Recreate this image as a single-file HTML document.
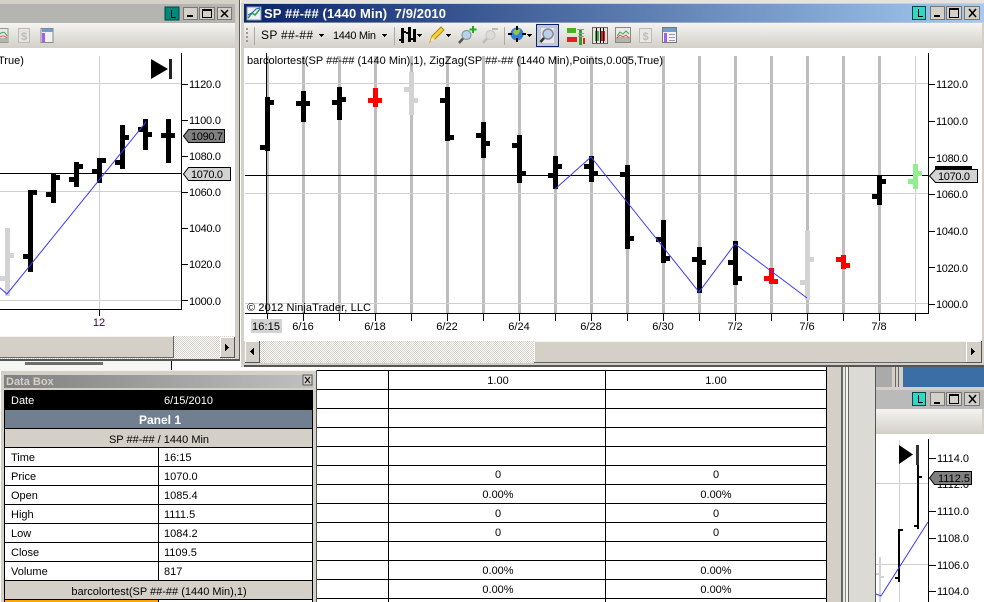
<!DOCTYPE html>
<html><head><meta charset="utf-8"><style>
html,body{margin:0;padding:0;background:#fff;width:984px;height:602px;overflow:hidden}
svg{display:block;font-family:"Liberation Sans",sans-serif;font-size:11px;fill:#000}
.c{shape-rendering:crispEdges}
.m{text-anchor:middle}
</style></head><body>
<svg width="984" height="602" viewBox="0 0 984 602" xmlns="http://www.w3.org/2000/svg">
<defs>
<linearGradient id="tb" x1="0" y1="0" x2="0" y2="1"><stop offset="0" stop-color="#f5f4f1"/><stop offset="1" stop-color="#d3d0c8"/></linearGradient>
<linearGradient id="act" x1="0" y1="0" x2="1" y2="0"><stop offset="0" stop-color="#0a246a"/><stop offset="1" stop-color="#a6caf0"/></linearGradient>
<linearGradient id="ina" x1="0" y1="0" x2="1" y2="0"><stop offset="0" stop-color="#808080"/><stop offset="1" stop-color="#c0c0c0"/></linearGradient>
<pattern id="dith" width="2" height="2" patternUnits="userSpaceOnUse"><rect width="2" height="2" fill="#fff"/><rect width="1" height="1" fill="#d4d0c8"/><rect x="1" y="1" width="1" height="1" fill="#d4d0c8"/></pattern>
</defs>
<g class="c">
<rect width="984" height="602" fill="#fff"/>
<!-- LEFT WINDOW -->
<rect x="0" y="0" width="240" height="361" fill="#d4d0c8"/>
<rect x="0" y="4" width="235" height="19" fill="#b4b4b0"/>
<rect x="0" y="23" width="235" height="25" fill="url(#tb)"/>
<rect x="0" y="48" width="235" height="288" fill="#fff"/>
<rect x="239" y="0" width="1" height="361" fill="#5c5c58"/>
<rect x="0" y="359" width="240" height="2" fill="#555"/>
<!-- left chart grid -->
<path d="M0 83h181v1H0zM0 191h181v1H0zM0 300h181v1H0zM99 56h1v253h-1z" fill="#d0d0c8"/>
<path d="M181 53h1v257h-1zM0 309h181v1H0zM99 310h1v6h-1zM0 173h181v1H0zM182 84h6v1h-6zM182 120h6v1h-6zM182 156h6v1h-6zM182 192h6v1h-6zM182 228h6v1h-6zM182 264h6v1h-6zM182 300h6v1h-6z" fill="#000"/>
<path d="M5 228h5v68H5zM0 276h5v5H0zM10 253h4v5h-4z" fill="#d3d3d3"/>
<path d="M28 190h5v82h-5zM23 254h5v5h-5zM33 190h4v5h-4zM51 174h5v29h-5zM46 192h5v5h-5zM56 175h4v5h-4zM74 162h5v25h-5zM69 177h5v5h-5zM79 164h4v5h-4zM97 158h5v25h-5zM92 169h5v5h-5zM102 158h4v5h-4zM120 125h5v44h-5zM115 160h5v5h-5zM125 135h4v5h-4zM143 119h5v31h-5zM138 127h5v5h-5zM148 132h4v5h-4zM166 119h5v44h-5zM161 133h14v5h-14z" fill="#000"/>
</g>
<path d="M-1 287L7 294L146 122" fill="none" stroke="#3a3aff" stroke-width="1"/>
<path d="M151 59L168 69L151 79z" fill="#000"/>
<g class="c"><rect x="169" y="59" width="3" height="20" fill="#222"/></g>
<path d="M183.500 136L188.500 129.500H224.500V142.500H188.500z" fill="#808080" stroke="#000"/>
<path d="M183.500 174L188.500 167.500H230.500V180.500H188.500z" fill="#d3d3d3" stroke="#000"/>
<g>
<text x="189" y="88" textLength="32">1120.0</text><text x="189" y="124" textLength="32">1100.0</text>
<text x="191" y="140" textLength="32">1090.7</text>
<text x="189" y="160" textLength="32">1080.0</text><text x="191" y="178" textLength="32">1070.0</text>
<text x="189" y="196" textLength="32">1060.0</text><text x="189" y="232" textLength="32">1040.0</text>
<text x="189" y="268" textLength="32">1020.0</text><text x="189" y="305" textLength="32">1000.0</text>
<text x="99" y="326" class="m" fill="#400040">12</text>
<text x="-2" y="64">True)</text>
</g>
<!-- left toolbar fragments -->
<g class="c">
<rect x="-1" y="28.500" width="9" height="14" fill="#e8e8e4" stroke="#999"/>
<rect x="0" y="38" width="8" height="4" fill="#b5b5ac"/>
<rect x="18.500" y="28.500" width="11" height="14" fill="#e4e3de" stroke="#bbb"/>
<rect x="41" y="28.500" width="12" height="14" fill="#f0f0f5" stroke="#888"/>
<rect x="42" y="29" width="11" height="3" fill="#6f9fc8"/><rect x="42" y="33" width="3" height="9" fill="#a060f0"/>
<!-- left window buttons -->
<rect x="165" y="7" width="14" height="13" fill="#008878" stroke="#044"/>
<path d="M171 10h1v7h4v1h-5z" fill="#000"/>
<rect x="183.500" y="7.500" width="14" height="12" fill="#d4d0c8" stroke="#777"/><rect x="187" y="15" width="6" height="2" fill="#000"/>
<rect x="199.500" y="7.500" width="15" height="12" fill="#d4d0c8" stroke="#777"/><rect x="202.500" y="9.500" width="9" height="8" fill="none" stroke="#000"/><rect x="202" y="9" width="10" height="2" fill="#000"/>
<rect x="217.500" y="7.500" width="14" height="12" fill="#d4d0c8" stroke="#777"/>
</g>
<path d="M0 34c3-3 5-2 7 2" fill="none" stroke="#38a860"/><path d="M0 37c3-2 5-1 7 1" fill="none" stroke="#e05050"/>
<text x="24" y="40" class="m" font-weight="bold" font-size="11" style="fill:#bbb">$</text>
<path d="M221 10l7 7m0-7l-7 7" stroke="#000" stroke-width="1.500"/>
<!-- left scrollbar -->
<g class="c">
<rect x="0" y="336" width="235" height="23" fill="url(#dith)"/>
<rect x="0" y="337" width="174" height="21" fill="#d4d0c8"/>
<path d="M0 336h174v1H0zM173 337h1v20h-1zM0 357h174v1H0z" fill="#666"/>
<path d="M0 336h173v1H0z" fill="#f4f3ef"/>
<rect x="220" y="337" width="15" height="21" fill="#d4d0c8"/><path d="M220 337h15v1h-15zM220 338h1v19h-1z" fill="#fff"/><path d="M220 357h15v1h-15zM234 337h1v21h-1z" fill="#555"/>
<path d="M225 344h1v7h-1zM226 345h1v5h-1zM227 346h1v3h-1zM228 347h1v1h-1z" fill="#000"/>
<rect x="0" y="361" width="240" height="9" fill="#f6f6f4"/>
<rect x="25" y="362" width="78" height="3" fill="#333" opacity=".7"/>
<rect x="171" y="361" width="1" height="9" fill="#000"/>
<rect x="172" y="361" width="68" height="9" fill="#fff"/>
</g>
<!-- MAIN WINDOW -->
<g class="c">
<rect x="240" y="0" width="744" height="367" fill="#d4d0c8"/>
<rect x="240" y="0" width="1" height="367" fill="#fff"/>
<rect x="241" y="0" width="743" height="3" fill="#e6e3dc"/>
<rect x="244" y="4" width="740" height="18.500" fill="url(#act)"/>
<rect x="244" y="23" width="738" height="25" fill="url(#tb)"/>
<rect x="244" y="48" width="738" height="293" fill="#fff"/>
<rect x="244" y="365" width="740" height="2" fill="#555"/>
<!-- grid columns -->
<path d="M266 56h3v257h-3zM302 56h3v257h-3zM338 56h3v257h-3zM374 56h3v257h-3zM410 56h3v257h-3zM446 56h3v257h-3zM482 56h3v257h-3zM518 56h3v257h-3zM554 56h3v257h-3zM590 56h3v257h-3zM626 56h3v257h-3zM662 56h3v257h-3zM698 56h3v257h-3zM734 56h3v257h-3zM770 56h3v257h-3zM806 56h3v257h-3zM842 56h3v257h-3zM878 56h3v257h-3z" fill="#bebebe"/>
<path d="M915 56h1v257h-1zM245 83h683v1H245zM245 193h683v1H245zM245 303h683v1H245z" fill="#d0d0c8"/>
<path d="M245 175h683v1H245zM245 313h684v1H245zM928 53h1v261h-1zM266 53h1v260h-1z" fill="#000"/>
<path d="M267 314h1v7h-1zM303 314h1v7h-1zM339 314h1v7h-1zM375 314h1v7h-1zM411 314h1v7h-1zM447 314h1v7h-1zM483 314h1v7h-1zM519 314h1v7h-1zM555 314h1v7h-1zM591 314h1v7h-1zM627 314h1v7h-1zM663 314h1v7h-1zM699 314h1v7h-1zM735 314h1v7h-1zM771 314h1v7h-1zM807 314h1v7h-1zM843 314h1v7h-1zM879 314h1v7h-1zM915 314h1v7h-1z" fill="#000"/>
<path d="M929 84h6v1h-6zM929 121h6v1h-6zM929 157h6v1h-6zM929 194h6v1h-6zM929 231h6v1h-6zM929 267h6v1h-6zM929 304h6v1h-6z" fill="#000"/>
<path d="M265 97h5v54h-5zM260 145h5v5h-5zM270 100h4v5h-4zM301 91h5v31h-5zM296 101h14v5h-14zM337 87h5v33h-5zM332 100h5v5h-5zM342 97h4v5h-4zM445 87h5v54h-5zM440 98h5v5h-5zM450 135h4v5h-4zM481 122h5v36h-5zM476 133h5v5h-5zM486 141h4v5h-4zM517 135h5v48h-5zM512 143h5v5h-5zM522 171h4v5h-4zM553 156h5v33h-5zM548 173h5v5h-5zM558 164h4v5h-4zM589 156h5v26h-5zM584 164h5v5h-5zM594 171h4v5h-4zM625 165h5v84h-5zM620 172h5v5h-5zM630 236h4v5h-4zM661 220h5v43h-5zM656 237h5v5h-5zM666 256h4v5h-4zM697 247h5v46h-5zM692 257h5v5h-5zM702 260h4v5h-4zM733 241h5v44h-5zM728 260h5v5h-5zM738 276h4v5h-4zM877 175h5v30h-5zM872 194h5v5h-5zM882 179h4v5h-4z" fill="#000"/>
<path d="M373 88h5v19h-5zM368 98h14v5h-14zM769 268h5v16h-5zM764 276h5v5h-5zM774 279h4v5h-4zM841 255h5v14h-5zM836 257h5v5h-5zM846 263h4v5h-4z" fill="#f00"/>
<path d="M409 72h5v43h-5zM404 87h5v5h-5zM414 98h4v5h-4zM805 231h5v69h-5zM800 280h5v5h-5zM810 257h4v5h-4z" fill="#d3d3d3"/>
<path d="M913 164h5v25h-5zM908 179h5v5h-5zM918 171h4v5h-4z" fill="#90ee90"/>
<rect x="935" y="166" width="37" height="4" fill="#000"/>
</g>
<path d="M555 189L591 157L699 292L735 244L807 298" fill="none" stroke="#3a3aff" stroke-width="1"/>
<path d="M929.500 176L935.500 169.500H977.500V182.500H935.500z" fill="#d3d3d3" stroke="#000"/>
<!-- main text -->
<text x="264" y="18" font-weight="bold" font-size="13" style="fill:#fff" textLength="182" xml:space="preserve">SP ##-## (1440 Min)  7/9/2010</text>
<text x="247" y="64" textLength="416">barcolortest(SP ##-## (1440 Min),1), ZigZag(SP ##-## (1440 Min),Points,0.005,True)</text>
<text x="247" y="311" textLength="124">© 2012 NinjaTrader, LLC</text>
<g class="c"><rect x="251" y="319" width="31" height="14" fill="#d3d3d3"/></g>
<text x="252" y="330" textLength="28">16:15</text>
<g class="m">
<text x="303" y="330">6/16</text><text x="375" y="330">6/18</text><text x="447" y="330">6/22</text><text x="519" y="330">6/24</text><text x="591" y="330">6/28</text><text x="663" y="330">6/30</text><text x="735" y="330">7/2</text><text x="807" y="330">7/6</text><text x="879" y="330">7/8</text>
</g>
<text x="936" y="88" textLength="32">1120.0</text><text x="936" y="125" textLength="32">1100.0</text><text x="936" y="162" textLength="32">1080.0</text>
<text x="938" y="180" textLength="32">1070.0</text>
<text x="936" y="198" textLength="32">1060.0</text><text x="936" y="235" textLength="32">1040.0</text><text x="936" y="272" textLength="32">1020.0</text><text x="936" y="308" textLength="32">1000.0</text>
<!-- main toolbar text -->
<text x="261" y="39" font-size="12" textLength="52">SP ##-##</text>
<text x="333" y="39" font-size="11" textLength="43">1440 Min</text>
<g class="c">
<path d="M246 28h2v2h-2zM246 32h2v2h-2zM246 36h2v2h-2zM246 40h2v2h-2z" fill="#999"/>
<path d="M254 27h1v18h-1zM394 27h1v18h-1zM504 27h1v18h-1z" fill="#aaa"/>
<path d="M319 34h5v1h-5zM320 35h3v1h-3zM321 36h1v1h-1zM382 34h5v1h-5zM383 35h3v1h-3zM384 36h1v1h-1zM417 34h5v1h-5zM418 35h3v1h-3zM419 36h1v1h-1zM446 34h5v1h-5zM447 35h3v1h-3zM448 36h1v1h-1zM527 34h5v1h-5zM528 35h3v1h-3zM529 36h1v1h-1z" fill="#000"/>
<!-- bars icon -->
<path d="M401 28h3v15h-3zM399 39h2v2h-2zM404 31h2v2h-2zM408 27h3v15h-3zM406 32h2v2h-2zM411 38h2v2h-2zM413 29h3v13h-3z" fill="#000"/>
<!-- selected button -->
<rect x="536.500" y="24.500" width="22" height="22" fill="#c3c8d8" stroke="#0a246a"/>
<rect x="541" y="28" width="13" height="15" fill="#e8e8e8"/>
<!-- right-hand toolbar icons -->
<rect x="567" y="28" width="9" height="5" fill="#4caf2a"/><rect x="567" y="37" width="10" height="5" fill="#d22"/>
<rect x="579" y="30" width="3" height="15" fill="#3a9a30"/><rect x="583" y="38" width="2" height="6" fill="#d22"/>
<path d="M577 29h7v1h-7zM578 33h6v1h-6zM578 36h6v1h-6z" fill="#999"/>
<rect x="592.500" y="27.500" width="15" height="16" fill="#e4e2dc" stroke="#666"/>
<rect x="595" y="31" width="4" height="10" fill="#38b030"/><rect x="601" y="31" width="4" height="10" fill="#e02020"/>
<path d="M596 28h1v15h-1zM600 28h1v15h-1zM603 28h1v15h-1z" fill="#000"/>
<rect x="615.500" y="27.500" width="15" height="15" fill="#ece9e2" stroke="#888"/>
<rect x="616" y="37" width="14" height="5" fill="#b5b5ac"/>
<rect x="639.500" y="28.500" width="12" height="14" fill="#e8e7e2" stroke="#bbb"/>
<rect x="662.500" y="27.500" width="14" height="15" fill="#f2f2f8" stroke="#777"/>
<rect x="663" y="28" width="13" height="4" fill="#6f9fc8"/><rect x="664" y="33" width="3" height="9" fill="#a060f0"/>
<path d="M669 34h6v1h-6zM669 37h6v1h-6zM669 40h6v1h-6z" fill="#99a"/>
</g>
<path d="M617 36l3-4 3 2 3-3 3 3" fill="none" stroke="#38a860"/><path d="M617 38l3-3 3 2 3-2 3 3" fill="none" stroke="#e05050"/>
<text x="645.500" y="40" class="m" font-weight="bold" font-size="11" style="fill:#bbb">$</text>
<path d="M430 42l2-6 9-9 3 3-9 9z" fill="#f5cf3a" stroke="#b08a10" stroke-width="1"/>
<path d="M430 42l2-5 3 3z" fill="#fbe6b0"/>
<circle cx="466.500" cy="35" r="4.500" fill="#b8d2e8" stroke="#8a98a6" stroke-width="1.200"/><path d="M463 38.500l-4 4.500" stroke="#555" stroke-width="2.500"/>
<path d="M473 26v7m-3.500-3.500h7" stroke="#18b018" stroke-width="2"/>
<circle cx="490.500" cy="35" r="4.500" fill="#dcdcd8" stroke="#c8c8c4" stroke-width="1.200"/><path d="M487 38.500l-4 4.500" stroke="#bbb" stroke-width="2.500"/><path d="M492 29h6" stroke="#bbb" stroke-width="2"/>
<circle cx="517" cy="34" r="6.500" fill="#2f80d8"/><path d="M513 32c2-4 6-4 7-2 0 3-3 6-5 5z" fill="#9bc23c"/><path d="M517 26v4m0 8v4m-9-8h4m10 0h4" stroke="#000" stroke-width="2"/>
<circle cx="548" cy="34" r="5" fill="#b8d2e8" stroke="#889" stroke-width="1.500"/><path d="M544 38l-3.500 4" stroke="#333" stroke-width="2.500"/>
<!-- main title icon -->
<g class="c"><rect x="247" y="7" width="14" height="13" fill="#eef2f8" stroke="#89a"/></g>
<path d="M248 18l4-5 3 2 5-6" fill="none" stroke="#2aa040" stroke-width="1.500"/><path d="M248 15l4-2 4-4 4-1" fill="none" stroke="#2060c0" stroke-width="1"/>
<g class="c">
<rect x="912.500" y="6.500" width="13" height="13" fill="#33d6c6" stroke="#044"/>
<path d="M918 9h1v7h4v1h-5z" fill="#000"/>
<rect x="930.500" y="6.500" width="14" height="13" fill="#d4d0c8" stroke="#777"/><rect x="934" y="15" width="6" height="2" fill="#000"/>
<rect x="946.500" y="6.500" width="15" height="13" fill="#d4d0c8" stroke="#777"/><rect x="949.500" y="8.500" width="9" height="9" fill="none" stroke="#000"/><rect x="949" y="8" width="10" height="2" fill="#000"/>
<rect x="964.500" y="6.500" width="15" height="13" fill="#d4d0c8" stroke="#777"/>
</g>
<path d="M969 9l7 8m0-8l-7 8" stroke="#000" stroke-width="1.500"/>
<!-- main scrollbar -->
<g class="c">
<rect x="245" y="341" width="737" height="22" fill="url(#dith)"/>
<rect x="534" y="341" width="432" height="22" fill="#d4d0c8"/>
<path d="M534 341h432v1H534zM534 342h1v20h-1z" fill="#f4f3ef"/>
<path d="M534 362h432v1H534z" fill="#666"/>
<rect x="245" y="341" width="15" height="22" fill="#d4d0c8"/><path d="M245 341h15v1h-15zM245 342h1v20h-1z" fill="#fff"/><path d="M245 362h15v1h-15zM259 341h1v22h-1z" fill="#555"/>
<path d="M250 351h1v1h-1zM251 350h1v3h-1zM252 349h1v5h-1zM253 348h1v7h-1z" fill="#000"/>
<rect x="966" y="341" width="16" height="22" fill="#d4d0c8"/><path d="M966 341h16v1h-16zM966 342h1v20h-1z" fill="#fff"/><path d="M966 362h16v1h-16zM981 341h1v22h-1z" fill="#555"/>
<path d="M971 348h1v7h-1zM972 349h1v5h-1zM973 350h1v3h-1zM974 351h1v1h-1z" fill="#000"/>
<!-- MIDDLE TABLE -->
<rect x="317" y="367" width="510" height="235" fill="#fff"/>
<path d="M317 370h510v1H317zM317 389h510v1H317zM317 408h510v1H317zM317 427h510v1H317zM317 446h510v1H317zM317 465h510v1H317zM317 484h510v1H317zM317 503h510v1H317zM317 522h510v1H317zM317 541h510v1H317zM317 560h510v1H317zM317 579h510v1H317zM317 598h510v1H317zM388 370h1v232h-1zM605 370h1v232h-1zM826 367h1v235h-1z" fill="#000"/>
<rect x="827" y="367" width="14" height="235" fill="#d4d0c8"/>
<rect x="841" y="367" width="2" height="235" fill="#666"/>
<rect x="843" y="367" width="2" height="235" fill="#e8e6e0"/>
<rect x="845" y="367" width="1" height="235" fill="#888"/>
<rect x="846" y="367" width="2" height="235" fill="#f4f3ef"/>
<rect x="848" y="367" width="1" height="235" fill="#666"/>
<rect x="849" y="367" width="26" height="235" fill="#dcdad4"/>
<rect x="875" y="367" width="1" height="235" fill="#555"/>
<!-- RIGHT SMALL WINDOW -->
<rect x="876" y="367" width="16" height="20" fill="#aaa"/>
<rect x="892" y="367" width="3" height="20" fill="#d4d0c8"/><rect x="895" y="367" width="1" height="20" fill="#666"/><rect x="896" y="367" width="2" height="20" fill="#d4d0c8"/><rect x="898" y="367" width="1" height="20" fill="#666"/><rect x="899" y="367" width="4" height="20" fill="#d4d0c8"/>
<rect x="903" y="367" width="81" height="20" fill="#3b6ea5"/>
<rect x="876" y="387" width="108" height="215" fill="#d4d0c8"/>
<rect x="876" y="390" width="108" height="19" fill="#bababa"/>
<rect x="876" y="409" width="106" height="25" fill="url(#tb)"/>
<rect x="876" y="434" width="108" height="168" fill="#fff"/>
<path d="M876 483h52v1h-52zM876 564h52v1h-52zM899 440h1v162h-1z" fill="#d0d0c8"/>
<path d="M928 439h1v163h-1zM929 458h7v1h-7zM929 511h7v1h-7zM929 538h7v1h-7zM929 565h7v1h-7zM929 591h7v1h-7z" fill="#000"/>
<path d="M879 557h2v45h-2zM876 573h3v2h-3zM881 576h3v2h-3z" fill="#d3d3d3"/>
<path d="M917 464h2v65h-2zM919 476h3v2h-3zM914 525h3v2h-3zM898 529h2v53h-2zM900 529h3v2h-3zM895 577h3v2h-3z" fill="#000"/>
<rect x="916" y="445" width="3" height="20" fill="#333"/>
<rect x="912.500" y="392.500" width="13" height="13" fill="#33d6c6" stroke="#044"/>
<path d="M918 395h1v7h4v1h-5z" fill="#000"/>
<rect x="930.500" y="392.500" width="14" height="13" fill="#d4d0c8" stroke="#777"/><rect x="934" y="402" width="6" height="2" fill="#000"/>
<rect x="946.500" y="392.500" width="15" height="13" fill="#d4d0c8" stroke="#777"/><rect x="949.500" y="394.500" width="9" height="9" fill="none" stroke="#000"/><rect x="949" y="394" width="10" height="2" fill="#000"/>
<rect x="964.500" y="392.500" width="15" height="13" fill="#d4d0c8" stroke="#777"/>
</g>
<path d="M969 395l7 8m0-8l-7 8" stroke="#000" stroke-width="1.500"/>
<path d="M876 594L881 596L928 522" fill="none" stroke="#3a3aff" stroke-width="1"/>
<path d="M899 445L913 454.500L899 464z" fill="#000"/>
<text x="937" y="462" textLength="32">1114.0</text><text x="937" y="488" textLength="32">1112.0</text>
<path d="M929.500 478L934.500 471.500H971.500V484.500H934.500z" fill="#808080" stroke="#000"/>
<text x="938" y="482" textLength="32">1112.5</text>
<text x="937" y="515" textLength="32">1110.0</text><text x="937" y="542" textLength="32">1108.0</text><text x="937" y="569" textLength="32">1106.0</text><text x="937" y="595" textLength="32">1104.0</text>
<!-- middle table text -->
<g class="m">
<text x="498" y="384">1.00</text><text x="716" y="384">1.00</text>
<text x="498" y="478">0</text><text x="716" y="478">0</text>
<text x="498" y="498">0.00%</text><text x="716" y="498">0.00%</text>
<text x="498" y="517">0</text><text x="716" y="517">0</text>
<text x="498" y="536">0</text><text x="716" y="536">0</text>
<text x="498" y="574">0.00%</text><text x="716" y="574">0.00%</text>
<text x="498" y="593">0.00%</text><text x="716" y="593">0.00%</text>
</g>
<!-- DATA BOX -->
<g class="c">
<rect x="1" y="370" width="316" height="232" fill="#d4d0c8"/>
<rect x="1" y="370" width="316" height="1" fill="#f4f3ef"/>
<rect x="316" y="370" width="1" height="232" fill="#555"/>
<rect x="4" y="375" width="309" height="13" fill="url(#ina)"/>
<rect x="303" y="375" width="9" height="10" fill="#d4d0c8" stroke="#555"/>
<rect x="5" y="390" width="308" height="20" fill="#000"/>
<rect x="5" y="410" width="308" height="18" fill="#708090"/>
<rect x="5" y="428" width="308" height="19" fill="#d4d0c8"/>
<rect x="5" y="447" width="308" height="133" fill="#fff"/>
<rect x="5" y="580" width="308" height="20" fill="#d4d0c8"/>
<rect x="5" y="600" width="153" height="2" fill="#ffa500"/>
<rect x="158" y="600" width="155" height="2" fill="#fff"/>
<path d="M5 428h308v1H5zM5 447h308v1H5zM5 466h308v1H5zM5 485h308v1H5zM5 504h308v1H5zM5 523h308v1H5zM5 542h308v1H5zM5 561h308v1H5zM5 580h308v1H5zM5 599h308v1H5zM158 447h1v133h-1zM158 600h1v2h-1zM4 390h1v212H4zM312 390h1v212h-1z" fill="#000"/>
</g>
<path d="M305 377l5 6m0-6l-5 6" stroke="#000" stroke-width="1"/>
<text x="6" y="385" font-weight="bold" font-size="11" style="fill:#d4d0c8">Data Box</text>
<text x="11" y="404" style="fill:#fff">Date</text><text x="164" y="404" style="fill:#fff">6/15/2010</text>
<text x="160" y="424" class="m" font-weight="bold" font-size="12" style="fill:#fff">Panel 1</text>
<text x="159" y="443" class="m">SP ##-## / 1440 Min</text>
<text x="11" y="461">Time</text><text x="164" y="461">16:15</text>
<text x="11" y="480">Price</text><text x="164" y="480">1070.0</text>
<text x="11" y="499">Open</text><text x="164" y="499">1085.4</text>
<text x="11" y="518">High</text><text x="164" y="518">1111.5</text>
<text x="11" y="537">Low</text><text x="164" y="537">1084.2</text>
<text x="11" y="556">Close</text><text x="164" y="556">1109.5</text>
<text x="11" y="575">Volume</text><text x="164" y="575">817</text>
<text x="159" y="595" class="m">barcolortest(SP ##-## (1440 Min),1)</text>
</svg>
</body></html>
